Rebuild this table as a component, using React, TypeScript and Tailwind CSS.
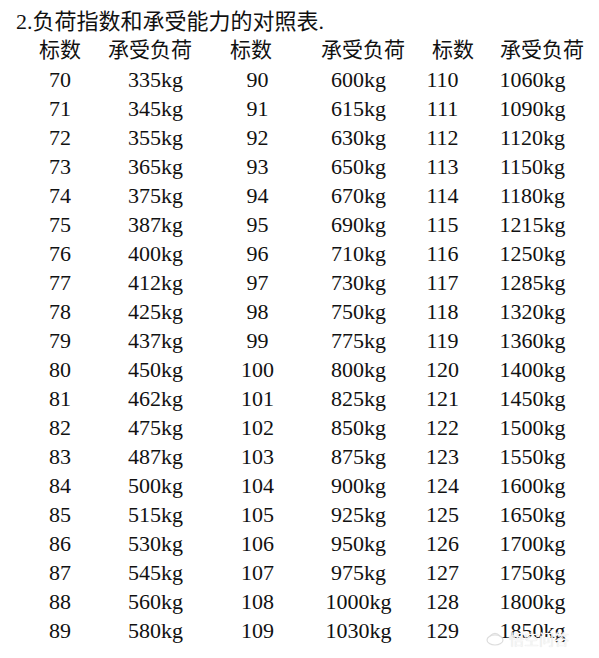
const rows: [string, string, string, string, string, string][] = [
  ["70", "335kg", "90", "600kg", "110", "1060kg"],
  ["71", "345kg", "91", "615kg", "111", "1090kg"],
  ["72", "355kg", "92", "630kg", "112", "1120kg"],
  ["73", "365kg", "93", "650kg", "113", "1150kg"],
  ["74", "375kg", "94", "670kg", "114", "1180kg"],
  ["75", "387kg", "95", "690kg", "115", "1215kg"],
  ["76", "400kg", "96", "710kg", "116", "1250kg"],
  ["77", "412kg", "97", "730kg", "117", "1285kg"],
  ["78", "425kg", "98", "750kg", "118", "1320kg"],
  ["79", "437kg", "99", "775kg", "119", "1360kg"],
  ["80", "450kg", "100", "800kg", "120", "1400kg"],
  ["81", "462kg", "101", "825kg", "121", "1450kg"],
  ["82", "475kg", "102", "850kg", "122", "1500kg"],
  ["83", "487kg", "103", "875kg", "123", "1550kg"],
  ["84", "500kg", "104", "900kg", "124", "1600kg"],
  ["85", "515kg", "105", "925kg", "125", "1650kg"],
  ["86", "530kg", "106", "950kg", "126", "1700kg"],
  ["87", "545kg", "107", "975kg", "127", "1750kg"],
  ["88", "560kg", "108", "1000kg", "128", "1800kg"],
  ["89", "580kg", "109", "1030kg", "129", "1850kg"],
];

const cols = "grid grid-cols-[96px_95px_109px_93px_75px_105px] ml-[12px]";

export default function App() {
  return (
    <div className="relative h-[658px] w-[599px] overflow-hidden bg-white [font-family:Liberation_Serif,Noto_Sans_CJK_SC,serif] text-[#111]">
      <div className="h-[35px] pl-[16px] pt-[7px] text-[22px] leading-[30px]">2.负荷指数和承受能力的对照表.</div>
      <div className={`${cols} h-[30px] text-[21px] leading-[30px]`}>
        <div className="text-center">标数</div>
        <div className="pr-[11px] text-center">承受负荷</div>
        <div className="pr-[13px] text-center">标数</div>
        <div className="pl-[9px] text-center">承受负荷</div>
        <div className="pl-[21px] text-center">标数</div>
        <div className="pl-[19px] text-center">承受负荷</div>
      </div>
      <div className="flex flex-col">
        {rows.map((r) => (
          <div key={r[0]} className={`${cols} h-[29px] text-[22px] leading-[29px]`}>
            {r.map((c, i) => (
              <div key={i} className="text-center">
                {c}
              </div>
            ))}
          </div>
        ))}
      </div>
      <div className="absolute bottom-[10px] right-[30px] flex items-center gap-[4px] text-[15px] leading-[18px] text-[#f6f6f6] [text-shadow:0_0_1px_#d8d8d8]">
        <svg width="20" height="16" viewBox="0 0 20 16" fill="none" stroke="#ddd" strokeWidth="1.2">
          <ellipse cx="10" cy="9" rx="8" ry="5" />
          <path d="M5 5 Q10 0 15 5" />
        </svg>
        <span className="[font-family:Noto_Sans_CJK_SC,sans-serif]">悟空问答</span>
      </div>
    </div>
  );
}
